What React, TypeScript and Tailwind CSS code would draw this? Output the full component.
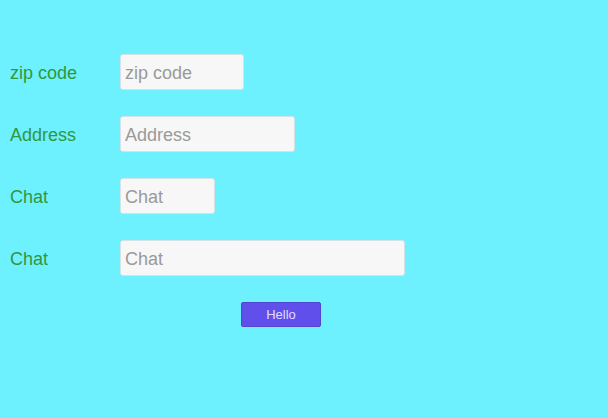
const fields = [
  { label: 'zip code', width: 'w-[124px]' },
  { label: 'Address', width: 'w-[175px]' },
  { label: 'Chat', width: 'w-[95px]' },
  { label: 'Chat', width: 'w-[285px]' },
];

export default function App() {
  return (
    <div
      className="w-[608px] h-[418px] bg-[#6ef1fe] pt-[54px] px-[10px]"
      style={{ fontFamily: '"Liberation Sans", Arial, sans-serif' }}
    >
      <div className="flex flex-col gap-[26px]">
        {fields.map((f, i) => (
          <div key={i} className="flex items-center h-[36px]">
            <label className="w-[110px] text-[18px] text-[#33963c] pt-[2px]">{f.label}</label>
            <input
              placeholder={f.label}
              className={`${f.width} h-[36px] px-[4px] pt-[2px] bg-[#f7f7f7] border border-[#d6e3e6] rounded-[3px] text-[18px] text-gray-700 placeholder:text-[#9a9a9a] outline-none`}
            />
          </div>
        ))}
        <div className="pl-[231px]">
          <button className="w-[80px] h-[25px] bg-[#614fec] border border-[#5344d0] rounded-[2px] text-[13px] text-[#e2ddff]">
            Hello
          </button>
        </div>
      </div>
    </div>
  );
}
